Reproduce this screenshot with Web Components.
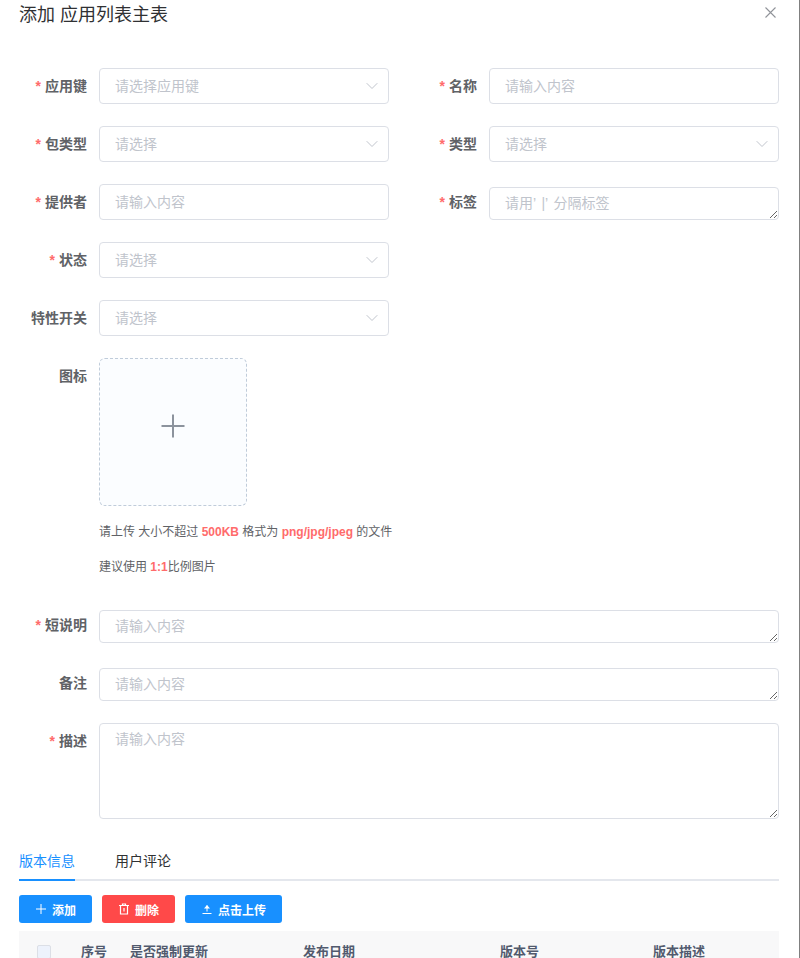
<!DOCTYPE html>
<html lang="zh">
<head>
<meta charset="utf-8">
<title>添加 应用列表主表</title>
<style>
  html, body { margin: 0; height: 958px; overflow: hidden; background: #fff; }
  body { font-family: "Liberation Sans", "Noto Sans CJK SC", sans-serif; font-size: 14px; color: #606266; }
</style>
</head>
<body>
<app-dialog heading="添加 应用列表主表">
  <form-row>
    <form-item label="应用键" required><form-select placeholder="请选择应用键"></form-select></form-item>
    <form-item label="名称" required><form-input placeholder="请输入内容"></form-input></form-item>
  </form-row>
  <form-row>
    <form-item label="包类型" required><form-select placeholder="请选择"></form-select></form-item>
    <form-item label="类型" required><form-select placeholder="请选择"></form-select></form-item>
  </form-row>
  <form-row>
    <form-item label="提供者" required><form-input placeholder="请输入内容"></form-input></form-item>
    <form-item label="标签" required><form-textarea placeholder="请用’ |’ 分隔标签"></form-textarea></form-item>
  </form-row>
  <form-row>
    <form-item label="状态" required><form-select placeholder="请选择"></form-select></form-item>
  </form-row>
  <form-row>
    <form-item label="特性开关"><form-select placeholder="请选择"></form-select></form-item>
  </form-row>
  <form-row wide>
    <form-item label="图标"><icon-upload></icon-upload></form-item>
  </form-row>
  <form-row wide>
    <form-item label="短说明" required><form-textarea placeholder="请输入内容"></form-textarea></form-item>
  </form-row>
  <form-row wide>
    <form-item label="备注"><form-textarea placeholder="请输入内容"></form-textarea></form-item>
  </form-row>
  <form-row wide>
    <form-item label="描述" required><form-textarea placeholder="请输入内容" tall></form-textarea></form-item>
  </form-row>
  <tab-bar></tab-bar>
  <tool-bar></tool-bar>
  <version-table></version-table>
</app-dialog>

<script>
class AppDialog extends HTMLElement {
  constructor() {
    super();
    this.attachShadow({ mode: 'open' });
  }

  connectedCallback() {
    this.shadowRoot.innerHTML = `
      <style>
        :host { display: block; position: relative; height: 958px; box-sizing: border-box; padding: 0 20px 0 19px; overflow: hidden; border-right: 1px solid #808080; }
        h2 { margin: 0; height: 68px; font-size: 18px; font-weight: 400; line-height: 31px; color: #303133; }
        svg { position: absolute; top: 7px; right: 23px; }
      </style>
      <h2>${this.getAttribute('heading')}</h2>
      <svg width="11" height="11" viewBox="0 0 11 11" fill="none" stroke="#909399" stroke-width="1.100"><path d="M.5.5l10 10M10.500.5l-10 10"/></svg>
      <slot></slot>
    `;
  }
}

class FormRow extends HTMLElement {
  constructor() {
    super();
    this.attachShadow({ mode: 'open' });
    this.shadowRoot.innerHTML = `
      <style>
        :host { display: grid; grid-template-columns: 370px 370px; column-gap: 20px; margin-bottom: 22px; }
        :host([wide]) { grid-template-columns: 760px; }
      </style>
      <slot></slot>
    `;
  }
}

class FormItem extends HTMLElement {
  constructor() {
    super();
    this.attachShadow({ mode: 'open' });
  }

  connectedCallback() {
    const star = this.hasAttribute('required') ? '<i>*</i>' : '';
    this.shadowRoot.innerHTML = `
      <style>
        :host { display: grid; grid-template-columns: 80px 1fr; min-width: 0; }
        label { padding-right: 12px; text-align: right; font-weight: 700; line-height: 36px; color: #606266; white-space: nowrap; }
        i { font-style: normal; color: #ff6b6b; margin-right: 4px; }
      </style>
      <label>${star}${this.getAttribute('label')}</label>
      <div><slot></slot></div>
    `;
  }
}

const fieldStyle = `
  :host { display: block; }
  input, textarea {
    display: block; width: 100%; box-sizing: border-box; margin: 0;
    border: 1px solid #dcdfe6; border-radius: 4px; background: #fff; outline: none;
    font: 14px "Liberation Sans", "Noto Sans CJK SC", sans-serif; color: #606266;
  }
  input { height: 36px; padding: 0 30px 0 15px; line-height: 36px; }
  textarea { padding: 5px 15px; line-height: 1.5; resize: vertical; word-spacing: 2px; }
  ::placeholder { color: #c0c4cc; opacity: 1; }
`;

class FormInput extends HTMLElement {
  constructor() {
    super();
    this.attachShadow({ mode: 'open' });
  }

  connectedCallback() {
    this.shadowRoot.innerHTML = `
      <style>${fieldStyle}</style>
      <input type="text" placeholder="${this.getAttribute('placeholder')}">
    `;
  }
}

class FormSelect extends HTMLElement {
  constructor() {
    super();
    this.attachShadow({ mode: 'open' });
  }

  connectedCallback() {
    this.shadowRoot.innerHTML = `
      <style>${fieldStyle}
        :host { position: relative; }
        svg { position: absolute; top: 14px; right: 11px; }
      </style>
      <input type="text" readonly placeholder="${this.getAttribute('placeholder')}">
      <svg width="12" height="8" viewBox="0 0 12 8" fill="none" stroke="#c0c4cc" stroke-width="1"><path d="M.7 1.200L6 6.500l5.300-5.300"/></svg>
    `;
  }
}

class FormTextarea extends HTMLElement {
  constructor() {
    super();
    this.attachShadow({ mode: 'open' });
  }

  connectedCallback() {
    const tall = this.hasAttribute('tall');
    this.shadowRoot.innerHTML = `
      <style>${fieldStyle}
        :host { padding-top: ${tall ? 0 : 3}px; }
        textarea { height: ${tall ? 96 : 33}px; }
      </style>
      <textarea placeholder="${this.getAttribute('placeholder')}"></textarea>
    `;
  }
}

class IconUpload extends HTMLElement {
  constructor() {
    super();
    this.attachShadow({ mode: 'open' });
    this.shadowRoot.innerHTML = `
      <style>
        :host { display: block; }
        .card { display: flex; align-items: center; justify-content: center; box-sizing: border-box; width: 148px; height: 148px; padding-bottom: 12px; border: 1px dashed #c0ccda; border-radius: 6px; background: #fbfdff; }
        p { margin: 0; font-size: 12px; line-height: 35px; color: #606266; white-space: nowrap; }
        p:first-of-type { margin-top: 9px; }
        b { color: #ff6b6b; }
      </style>
      <div class="card">
        <svg width="24" height="24" viewBox="0 0 24 24" fill="none" stroke="#8c939d" stroke-width="2"><path d="M12 .5v23M.5 12h23"/></svg>
      </div>
      <p>请上传 大小不超过 <b>500KB</b> 格式为 <b>png/jpg/jpeg</b> 的文件</p>
      <p>建议使用 <b>1:1</b>比例图片</p>
    `;
  }
}

class TabBar extends HTMLElement {
  constructor() {
    super();
    this.attachShadow({ mode: 'open' });
    this.shadowRoot.innerHTML = `
      <style>
        :host { display: flex; gap: 40px; height: 40px; box-sizing: border-box; margin-top: 20px; border-bottom: 2px solid #e4e7ed; }
        span { height: 40px; line-height: 40px; color: #303133; }
        .active { color: #1890ff; border-bottom: 2px solid #1890ff; height: 38px; }
      </style>
      <span class="active">版本信息</span>
      <span>用户评论</span>
    `;
  }
}

class ToolBar extends HTMLElement {
  constructor() {
    super();
    this.attachShadow({ mode: 'open' });
    this.shadowRoot.innerHTML = `
      <style>
        :host { display: flex; gap: 10px; margin-top: 14px; }
        button { display: flex; align-items: center; justify-content: center; gap: 5px; height: 28px; padding: 0 16px; border: 0; border-radius: 3px; background: #1890ff; color: #fff; font: 700 12px "Liberation Sans", "Noto Sans CJK SC", sans-serif; }
        button.danger { background: #ff4949; }
        svg { display: block; }
      </style>
      <button>
        <svg width="12" height="12" viewBox="0 0 12 12" fill="none" stroke="#fff" stroke-width="1"><path d="M6 1v10M1 6h10"/></svg>
        添加
      </button>
      <button class="danger">
        <svg width="12" height="12" viewBox="0 0 12 12" fill="none" stroke="#fff" stroke-width="1.200"><path d="M1 2.500h10M4.500 2.500V1h3v1.500M2.500 2.500v8.500h7V2.500M6 5v3.500"/></svg>
        删除
      </button>
      <button>
        <svg width="12" height="12" viewBox="0 0 12 12" fill="none" stroke="#fff" stroke-width="1"><path d="M1.500 10.500h9M6 8.500V2.500"/><path d="M3 5.500L6 2l3 3.500z" fill="#fff" stroke="none"/></svg>
        点击上传
      </button>
    `;
  }
}

class VersionTable extends HTMLElement {
  constructor() {
    super();
    this.attachShadow({ mode: 'open' });
    this.shadowRoot.innerHTML = `
      <style>
        :host { display: grid; grid-template-columns: 62px 49px 173px 197px 153px 1fr; align-items: start; height: 27px; margin-top: 8px; padding-top: 12px; box-sizing: border-box; background: #f8f8f9; color: #515a6e; font-size: 13px; font-weight: 700; line-height: 18px; white-space: nowrap; }
        .box { width: 14px; height: 14px; margin: 2px 0 0 18px; box-sizing: border-box; border: 1px solid #dcdfe6; border-radius: 2px; background: #edf2fc; }
      </style>
      <div><div class="box"></div></div>
      <span>序号</span>
      <span>是否强制更新</span>
      <span>发布日期</span>
      <span>版本号</span>
      <span>版本描述</span>
    `;
  }
}

customElements.define('app-dialog', AppDialog);
customElements.define('form-row', FormRow);
customElements.define('form-item', FormItem);
customElements.define('form-input', FormInput);
customElements.define('form-select', FormSelect);
customElements.define('form-textarea', FormTextarea);
customElements.define('icon-upload', IconUpload);
customElements.define('tab-bar', TabBar);
customElements.define('tool-bar', ToolBar);
customElements.define('version-table', VersionTable);
</script>
</body>
</html>
